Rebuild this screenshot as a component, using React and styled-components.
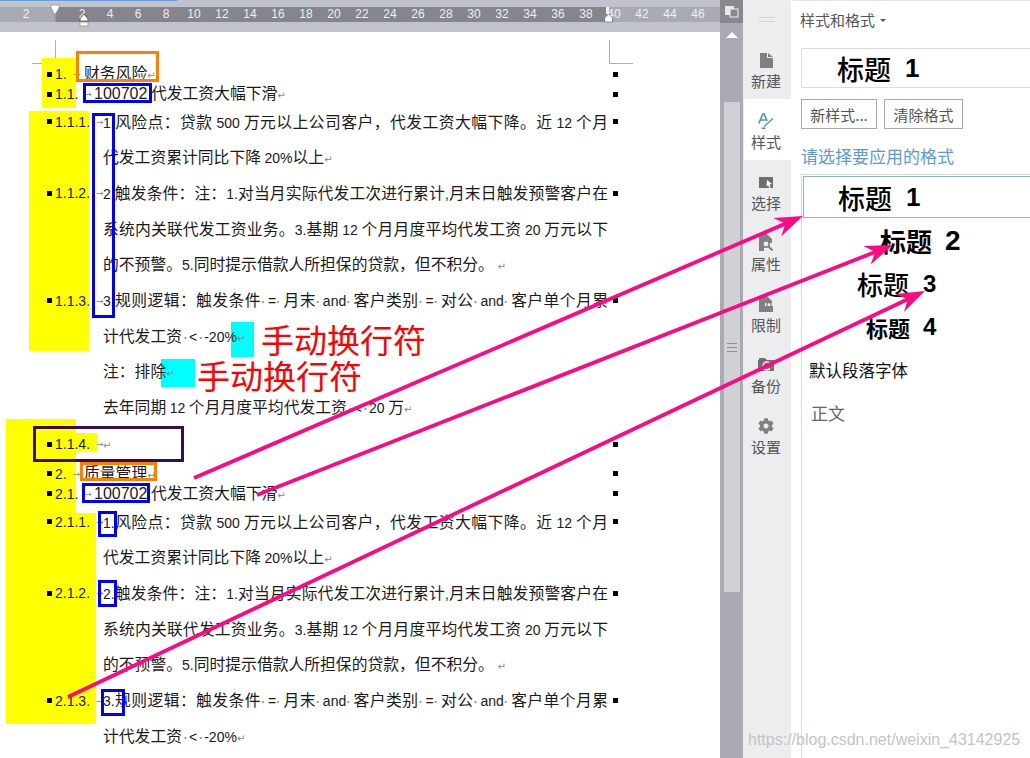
import React from "react";
import styled, { createGlobalStyle } from "styled-components";
import { FaCog } from "react-icons/fa";

const CJK = `"Noto Sans CJK SC", "Noto Sans", sans-serif`;
const LATIN = `"Liberation Sans", "Noto Sans CJK SC", sans-serif`;

const Global = createGlobalStyle`
  html, body { margin: 0; padding: 0; background: #fff; }
  body { font-family: ${CJK}; }
  * { box-sizing: border-box; }
`;

const Page = styled.div`
  position: relative;
  width: 1030px;
  height: 758px;
  display: flex;
  overflow: hidden;
`;

/* ---------- document column ---------- */
const DocColumn = styled.div`
  width: 720px;
  height: 758px;
  display: flex;
  flex-direction: column;
  overflow: hidden;
  background: #fff;
`;
const TopStrip = styled.div`
  height: 7px;
  background: linear-gradient(to bottom, #6a9fdc 1px, #c0c3cc 1px) 0 0 / 177px 100% no-repeat, #c0c3cc;
`;
const Ruler = styled.div`
  position: relative;
  height: 15px;
  display: flex;
  padding-left: 12px;
  background: linear-gradient(to right, #a9abb4 54px, #85858e 54px, #85858e 607px, #a9abb4 607px);
`;
const RulerLabel = styled.span`
  width: 28px;
  flex: none;
  text-align: center;
  font: 12px/15px ${LATIN};
  color: #f0f0f2;
`;
const RulerMarker = styled.svg`
  position: absolute;
  left: ${(p) => p.$x}px;
  top: ${(p) => p.$y}px;
`;
const RulerFoot = styled.div`
  height: 10px;
  background: #c0c3cc;
`;
const Sheet = styled.div`
  flex: 1;
  padding-top: 32px;
`;
const CropMark = styled.div`
  position: absolute;
  top: 40px;
  width: 24px;
  height: 24px;
  border-bottom: 1px solid #aeaeae;
  left: ${(p) => p.$x}px;
  ${(p) => (p.$side === "left" ? "border-right: 1px solid #aeaeae;" : "border-left: 1px solid #aeaeae;")}
`;
const Row = styled.div`
  position: relative;
  z-index: 1;
  width: 618px;
  height: ${(p) => p.$h || 35.8}px;
  margin-top: ${(p) => p.$mt || 0}px;
  padding-left: ${(p) => (p.$cont ? 103 : 47)}px;
  display: flex;
  align-items: center;
  color: #1a1a1a;
  font-size: 15.8px;
  white-space: nowrap;
`;
const Bullet = styled.i`
  flex: none;
  width: 5px;
  height: 5px;
  margin-right: 3px;
  background: #000;
`;
const Num = styled.span`
  flex: none;
  width: ${(p) => p.$w}px;
  display: flex;
  align-items: center;
  font: 14px/20px ${LATIN};
`;
const TabArrow = styled.span`
  margin-left: 6px;
  color: #888;
  font: 9px/20px "DejaVu Sans", sans-serif;
`;
const Body = styled.div`
  flex: 1;
  min-width: 0;
  line-height: 22px;
  ${(p) => p.$full && "text-align: justify; text-align-last: justify; white-space: normal;"}
`;
const Lat = styled.span`
  font: ${(p) => (p.$big ? 16 : 14)}px/20px ${LATIN};
`;
const Sp = styled.span`
  display: inline-block;
  width: 7px;
  text-align: center;
  color: #999;
  font: bold 10px/20px "DejaVu Sans", sans-serif;
`;
const Ret = styled.span`
  color: #888;
  font: 10px/20px "DejaVu Sans", sans-serif;
`;
const EndMark = styled.i`
  flex: none;
  width: 5px;
  height: 5px;
  margin-left: 5px;
  background: ${(p) => (p.$off ? "transparent" : "#000")};
`;

const Mixed = ({ t, big }) =>
  t.split(/([A-Za-z0-9.,%<=-]+|·|↵)/).map((s, i) => {
    if (!s) return null;
    if (s === "·") return <Sp key={i}>·</Sp>;
    if (s === "↵") return <Ret key={i}>↵</Ret>;
    if (/^[A-Za-z0-9.,%<=-]+$/.test(s)) return <Lat key={i} $big={big}>{s}</Lat>;
    return <React.Fragment key={i}>{s}</React.Fragment>;
  });

const Para = ({ n, w, t, full, h, mt, big, end = true, cont }) => (
  <Row $h={h} $mt={mt} $cont={cont}>
    {!cont && <Bullet />}
    {!cont && (
      <Num $w={w}>
        {n}
        <TabArrow>→</TabArrow>
      </Num>
    )}
    <Body $full={full}>
      <Mixed t={t} big={big} />
    </Body>
    <EndMark $off={!end} />
  </Row>
);

/* ---------- scrollbar ---------- */
const ScrollCol = styled.div`
  position: relative;
  width: 23px;
  background: #a9aab3;
  display: flex;
  flex-direction: column;
  align-items: center;
`;
const ScrollCorner = styled.div`
  width: 23px;
  height: 23px;
  background: #88888f;
  display: flex;
  align-items: center;
  justify-content: center;
`;
const ScrollUp = styled.div`
  margin-top: 9px;
  width: 0;
  height: 0;
  border-left: 6px solid transparent;
  border-right: 6px solid transparent;
  border-bottom: 6px solid #fff;
`;
const Thumb = styled.div`
  margin-top: 64px;
  width: 16px;
  height: 490px;
  background: #d0d1d5;
  display: flex;
  align-items: center;
  justify-content: center;
`;

/* ---------- tab rail ---------- */
const Rail = styled.div`
  width: 48px;
  background: #ecedef;
  display: flex;
  flex-direction: column;
  align-items: stretch;
`;
const RailHandle = styled.div`
  height: 38px;
  display: flex;
  align-items: center;
  justify-content: center;
  &::before {
    content: "";
    width: 16px;
    height: 3px;
    border-top: 1px solid #d2d3d8;
    border-bottom: 1px solid #d2d3d8;
  }
`;
const Tab = styled.div`
  height: 61px;
  margin-left: 1px;
  padding: 13px 3px 0 0;
  display: flex;
  flex-direction: column;
  align-items: center;
  background: ${(p) => (p.$active ? "#fff" : "transparent")};
`;
const TabIcon = styled.div`
  height: 18px;
  display: flex;
  align-items: center;
  justify-content: center;
  color: #808080;
`;
const TabLabel = styled.span`
  margin-top: 2px;
  font-size: 15px;
  line-height: 20px;
  color: #555;
`;

/* ---------- style panel ---------- */
const Panel = styled.div`
  flex: 1;
  min-width: 0;
  overflow: hidden;
  display: flex;
  flex-direction: column;
  background: #fff;
  border-top: 1px solid #e4e4e4;
  padding-left: 10px;
`;
const PanelTitle = styled.div`
  margin: 9px 0 0 -1px;
  height: 20px;
  display: flex;
  align-items: center;
  font-size: 15px;
  line-height: 20px;
  color: #555;
  &::after {
    content: "";
    margin-left: 5px;
    border-left: 3px solid transparent;
    border-right: 3px solid transparent;
    border-top: 3px solid #555;
  }
`;
const CurrentStyle = styled.div`
  margin-top: 18px;
  width: 260px;
  height: 40px;
  flex: none;
  border: 1px solid #dcdcdc;
  display: flex;
  align-items: center;
  padding-left: 35px;
`;
const Buttons = styled.div`
  margin-top: 11px;
  display: flex;
  gap: 7px;
`;
const Button = styled.div`
  width: ${(p) => p.$w}px;
  height: 30px;
  border: 1px solid #a8a8a8;
  display: flex;
  align-items: center;
  justify-content: center;
  font-size: 15px;
  color: #555;
`;
const Hint = styled.div`
  margin-top: 16px;
  height: 22px;
  font-size: 17px;
  line-height: 22px;
  color: #5b9bd5;
`;
const ListBox = styled.div`
  margin-top: 7px;
  flex: 1;
  width: 260px;
  padding: 1px 0 0 1px;
  border-left: 1px solid #d9d9d9;
  border-top: 1px solid #d9d9d9;
`;
const SelectedItem = styled.div`
  margin-bottom: 1px;
  height: 42px;
  border: 1px solid #8fb0dc;
  display: flex;
  align-items: center;
  padding-left: 34px;
`;
const Item = styled.div`
  height: 43px;
  display: flex;
  align-items: center;
  padding-left: ${(p) => p.$indent}px;
`;
const Sample = styled.span`
  font-size: ${(p) => p.$size}px;
  font-weight: ${(p) => p.$weight};
  line-height: 1;
  color: #000;
`;
const SampleNum = styled.span`
  margin-left: ${(p) => p.$gap}px;
  font: bold ${(p) => p.$size}px/1 ${LATIN};
  color: #000;
`;
const PlainItem = styled.div`
  height: 43px;
  display: flex;
  align-items: center;
  padding-left: ${(p) => p.$indent}px;
  font-size: ${(p) => p.$size}px;
  color: ${(p) => p.$color};
`;

/* ---------- annotations painted over the screenshot ---------- */
const Shade = styled.div`
  position: absolute;
  z-index: 0;
  left: ${(p) => p.$x}px;
  top: ${(p) => p.$y}px;
  width: ${(p) => p.$w}px;
  height: ${(p) => p.$h}px;
  background: ${(p) => p.$color};
`;
const Frame = styled.div`
  position: absolute;
  z-index: 2;
  left: ${(p) => p.$x}px;
  top: ${(p) => p.$y}px;
  width: ${(p) => p.$w}px;
  height: ${(p) => p.$h}px;
  border: 3px solid ${(p) => p.$color};
`;
const RedNote = styled.div`
  position: absolute;
  z-index: 2;
  left: ${(p) => p.$x}px;
  top: ${(p) => p.$y}px;
  font-size: 33px;
  line-height: 34px;
  color: #ff0000;
  white-space: nowrap;
`;
const ArrowLayer = styled.svg`
  position: absolute;
  z-index: 3;
  left: 0;
  top: 0;
  pointer-events: none;
`;
const Watermark = styled.div`
  position: absolute;
  z-index: 4;
  left: 748px;
  top: 730px;
  font: 16px/20px ${LATIN};
  color: #c4c4c4;
  white-space: nowrap;
`;

const Arrow = ({ x1, y1, x2, y2 }) => {
  const d = Math.hypot(x2 - x1, y2 - y1);
  const ux = (x2 - x1) / d;
  const uy = (y2 - y1) / d;
  const nx = -uy;
  const ny = ux;
  const at = (a, b) => `${x2 - ux * a + nx * b},${y2 - uy * a + ny * b}`;
  return (
    <g fill="#fb0a83">
      <line x1={x1} y1={y1} x2={x2 - ux * 15} y2={y2 - uy * 15} stroke="#fb0a83" strokeWidth="3.8" />
      <polygon points={`${x2},${y2} ${at(28, 10)} ${at(19, 0)} ${at(28, -10)}`} />
    </g>
  );
};

const rulerLabels = ["2", ""].concat(Array.from({ length: 23 }, (_, i) => String((i + 1) * 2)));

const tabs = [
  {
    label: "新建",
    icon: (
      <svg width="13" height="15" viewBox="0 0 13 15">
        <path d="M0 0h7v5h6v10H0z M8 0l5 4H8z" fill="#808080" />
      </svg>
    ),
  },
  {
    label: "样式",
    active: true,
    icon: (
      <svg width="16" height="16" viewBox="0 0 16 16">
        <path d="M.8 10.500 4.800 1H6.200L9 8M2.500 7H7.500" fill="none" stroke="#4a90e2" strokeWidth="1.7" />
        <path d="M6 13.500 15 5.500M3.500 15.300H7.500" fill="none" stroke="#4a90e2" strokeWidth="1.4" />
      </svg>
    ),
  },
  {
    label: "选择",
    icon: (
      <svg width="15" height="13" viewBox="0 0 15 13">
        <path d="M0 1h14v11H0z" fill="#6e6e6e" />
        <path d="M8 4l5 4-2.500.4 1 3.200-1.400.4-1-3-1.600 1.400z" fill="#fff" />
      </svg>
    ),
  },
  {
    label: "属性",
    icon: (
      <svg width="16" height="18" viewBox="0 0 16 18">
        <path d="M1 0h8l5 5v4H1zM1 9h5v8H1z" fill="#808080" />
        <circle cx="8" cy="10" r="3.200" fill="#ecedef" stroke="#808080" strokeWidth="1.600" />
        <path d="M10 12l4.500 4.500" stroke="#808080" strokeWidth="2" />
      </svg>
    ),
  },
  {
    label: "限制",
    icon: (
      <svg width="14" height="16" viewBox="0 0 14 16">
        <path d="M0 0h8l5 5v2H6v9H0z" fill="#808080" />
        <rect x="6" y="10" width="8" height="6" fill="#808080" />
        <path d="M8 10V8.500a2 2 0 0 1 4 0V10" fill="none" stroke="#808080" strokeWidth="1.300" />
      </svg>
    ),
  },
  {
    label: "备份",
    icon: (
      <svg width="16" height="15" viewBox="0 0 16 15">
        <path d="M0 2h16v11H0z" fill="#707070" />
        <path d="M1 0h6l2 2H1z" fill="#707070" />
        <path d="M12 5.500a4 4 0 1 0 0 5" fill="none" stroke="#ecedef" strokeWidth="1.400" />
      </svg>
    ),
  },
  { label: "设置", icon: <FaCog size={16} color="#808080" /> },
];

export default function App() {
  return (
    <Page lang="zh-CN">
      <Global />
      <DocColumn>
        <TopStrip />
        <Ruler>
          {rulerLabels.map((l, i) => (
            <RulerLabel key={i}>{l}</RulerLabel>
          ))}
          <RulerMarker $x={50} $y={-3} width="10" height="18" viewBox="0 0 10 18">
            <path d="M1 1h8v3L5.500 10V18h-1V10L1 4z" fill="#fff" stroke="#8a8a92" strokeWidth="0.7" />
          </RulerMarker>
          <RulerMarker $x={79} $y={7} width="10" height="13" viewBox="0 0 10 13">
            <path d="M5 0l4 5v2H1V5z" fill="#fff" stroke="#444" strokeWidth="0.7" />
            <rect x="1" y="8" width="8" height="4" fill="#fff" stroke="#888" strokeWidth="0.7" />
          </RulerMarker>
          <RulerMarker $x={604} $y={0} width="10" height="16" viewBox="0 0 10 16">
            <rect x="2" y="0" width="3" height="7" fill="#f4f4f4" />
            <path d="M4.500 7 8.500 11V15H.5V11z" fill="#fff" stroke="#555" strokeWidth="0.6" />
          </RulerMarker>
        </Ruler>
        <RulerFoot />
        <Sheet>
          <CropMark $x={32} $side="left" />
          <CropMark $x={609} $side="right" />

          <Shade $x={42} $y={58} $w={34} $h={50} $color="#ffff00" />
          <Shade $x={29} $y={111} $w={60} $h={240} $color="#ffff00" />
          <Shade $x={6} $y={419} $w={70} $h={94} $color="#ffff00" />
          <Shade $x={76} $y={433} $w={21} $h={18} $color="#ffff00" />
          <Shade $x={6} $y={513} $w={90} $h={211} $color="#ffff00" />
          <Shade $x={231} $y={322} $w={23} $h={35} $color="#00ffff" />
          <Shade $x={161} $y={359} $w={34} $h={28} $color="#00ffff" />

          <Para n="1." w={29} h={20} t="财务风险↵" />
          <Para n="1.1." w={39} h={20} big t="100702 代发工资大幅下滑↵" />
          <Para n="1.1.1." w={48} full t="1.风险点：贷款 500 万元以上公司客户，代发工资大幅下降。近 12 个月" />
          <Para cont end={false} t="代发工资累计同比下降 20%以上↵" />
          <Para n="1.1.2." w={48} full t="2.触发条件：注：1.对当月实际代发工次进行累计,月末日触发预警客户在" />
          <Para cont full end={false} t="系统内关联代发工资业务。3.基期 12 个月月度平均代发工资 20 万元以下" />
          <Para cont end={false} t="的不预警。5.同时提示借款人所担保的贷款，但不积分。 ↵" />
          <Para n="1.1.3." w={48} full t="3.规则逻辑：触发条件·=·月末·and·客户类别·=·对公·and·客户单个月累" />
          <Para cont end={false} t="计代发工资·<·-20%↵" />
          <Para cont end={false} t="注：排除↵" />
          <Para cont end={false} t="去年同期 12 个月月度平均代发工资·<·20 万↵" />
          <Para n="1.1.4." w={48} t="↵" />
          <Para mt={2} n="2." w={29} h={20} t="质量管理↵" />
          <Para n="2.1." w={39} h={20} big t="100702 代发工资大幅下滑↵" />
          <Para n="2.1.1." w={48} full t="1.风险点：贷款 500 万元以上公司客户，代发工资大幅下降。近 12 个月" />
          <Para cont end={false} t="代发工资累计同比下降 20%以上↵" />
          <Para n="2.1.2." w={48} full t="2.触发条件：注：1.对当月实际代发工次进行累计,月末日触发预警客户在" />
          <Para cont full end={false} t="系统内关联代发工资业务。3.基期 12 个月月度平均代发工资 20 万元以下" />
          <Para cont end={false} t="的不预警。5.同时提示借款人所担保的贷款，但不积分。 ↵" />
          <Para n="2.1.3." w={48} full t="3.规则逻辑：触发条件·=·月末·and·客户类别·=·对公·and·客户单个月累" />
          <Para cont end={false} t="计代发工资·<·-20%↵" />
        </Sheet>
      </DocColumn>

      <ScrollCol>
        <ScrollCorner>
          <svg width="14" height="12" viewBox="0 0 14 12">
            <rect x="0" y="0" width="9" height="9" fill="#e8e8ea" />
            <rect x="5" y="3" width="8" height="8" fill="#88888f" stroke="#f2f2f2" />
          </svg>
        </ScrollCorner>
        <ScrollUp />
        <Thumb>
          <svg width="10" height="9" viewBox="0 0 10 9">
            <path d="M0 .5h10M0 4.500h10M0 8.500h10" stroke="#8f8f96" />
          </svg>
        </Thumb>
      </ScrollCol>

      <Rail>
        <RailHandle />
        {tabs.map((t) => (
          <Tab key={t.label} $active={t.active}>
            <TabIcon>{t.icon}</TabIcon>
            <TabLabel>{t.label}</TabLabel>
          </Tab>
        ))}
      </Rail>

      <Panel>
        <PanelTitle>样式和格式</PanelTitle>
        <CurrentStyle>
          <Sample $size={27} $weight={500}>标题</Sample>
          <SampleNum $size={26} $gap={14}>1</SampleNum>
        </CurrentStyle>
        <Buttons>
          <Button $w={76}>新样式...</Button>
          <Button $w={79}>清除格式</Button>
        </Buttons>
        <Hint>请选择要应用的格式</Hint>
        <ListBox>
          <SelectedItem>
            <Sample $size={27} $weight={500}>标题</Sample>
            <SampleNum $size={26} $gap={14}>1</SampleNum>
          </SelectedItem>
          <Item $indent={77}>
            <Sample $size={26} $weight={700}>标题</Sample>
            <SampleNum $size={28} $gap={13}>2</SampleNum>
          </Item>
          <Item $indent={54}>
            <Sample $size={26} $weight={500}>标题</Sample>
            <SampleNum $size={24} $gap={14}>3</SampleNum>
          </Item>
          <Item $indent={63}>
            <Sample $size={22} $weight={700}>标题</Sample>
            <SampleNum $size={24} $gap={13}>4</SampleNum>
          </Item>
          <PlainItem $indent={6} $size={16.5} $color="#111">默认段落字体</PlainItem>
          <PlainItem $indent={8} $size={17} $color="#666">正文</PlainItem>
        </ListBox>
      </Panel>

      <Frame $x={76} $y={51} $w={83} $h={31} $color="#ff8000" />
      <Frame $x={80} $y={462} $w={77} $h={19} $color="#ff8000" />
      <Frame $x={83} $y={83} $w={69} $h={20} $color="#0000ff" />
      <Frame $x={92} $y={113} $w={23} $h={205} $color="#0000ff" />
      <Frame $x={82} $y={483} $w={68} $h={20} $color="#0000ff" />
      <Frame $x={98} $y={511} $w={19} $h={26} $color="#0000ff" />
      <Frame $x={98} $y={580} $w={19} $h={27} $color="#0000ff" />
      <Frame $x={101} $y={689} $w={24} $h={27} $color="#0000ff" />
      <Frame $x={33} $y={426} $w={151} $h={36} $color="#3c0a50" />

      <RedNote $x={261} $y={322}>手动换行符</RedNote>
      <RedNote $x={197} $y={358}>手动换行符</RedNote>

      <ArrowLayer width="1030" height="758" viewBox="0 0 1030 758">
        <Arrow x1={194} y1={478} x2={803} y2={216} />
        <Arrow x1={257} y1={495} x2={893} y2={245} />
        <Arrow x1={68} y1={697} x2={925} y2={291} />
      </ArrowLayer>

      <Watermark>https://blog.csdn.net/weixin_43142925</Watermark>
    </Page>
  );
}
